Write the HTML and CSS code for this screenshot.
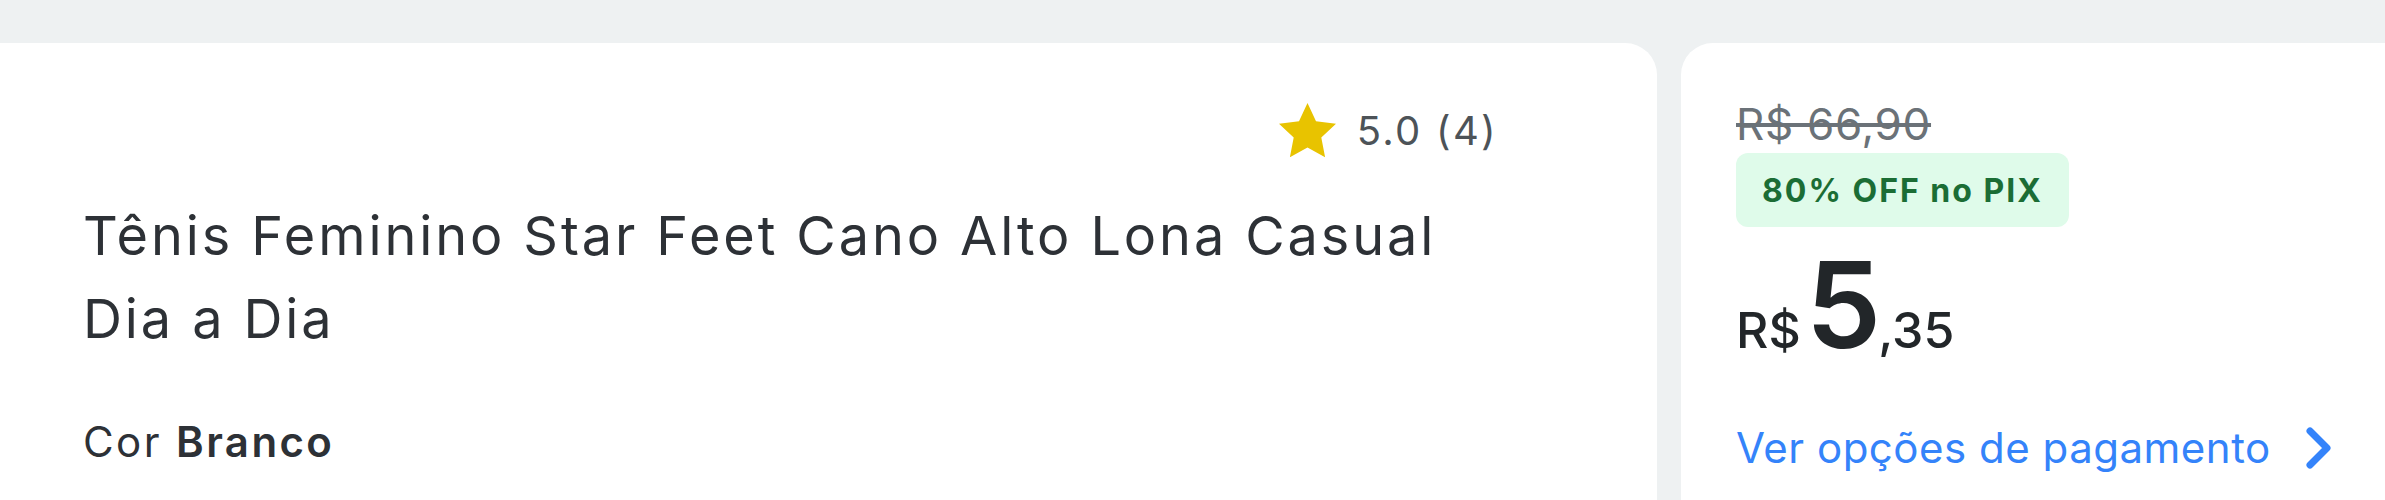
FILE: index.html
```html
<!DOCTYPE html>
<html lang="pt-BR">
<head>
    <meta charset="UTF-8">
    <title>Tênis Feminino Star Feet Cano Alto Lona Casual Dia a Dia</title>
    <link rel="stylesheet" href="styles.css">
</head>
<body>
    <div class="page">
        <div class="product">
            <div class="rating">
                <svg class="star" viewBox="0 0 57 55" width="57" height="55">
                    <path d="M28.5 0L37 18.3 57 20.7 42.3 34.5 46.1 54.3 28.5 44.5 10.9 54.3 14.7 34.5 0 20.7 20 18.3z" fill="#e8c300"/>
                </svg>
                <span class="rating-value">5.0 (4)</span>
            </div>
            <h1 class="title">Tênis Feminino Star Feet Cano Alto Lona Casual Dia a Dia</h1>
            <p class="variant">Cor <strong>Branco</strong></p>
        </div>

        <div class="buy">
            <s class="old-price">R$ 66,90</s>
            <div class="discount">80% OFF no PIX</div>
            <div class="price">
                <span class="currency">R$</span>
                <span class="fraction">5</span>
                <span class="cents">,35</span>
            </div>
            <a class="payment-link" href="#">
                Ver opções de pagamento
                <svg class="chevron" viewBox="0 0 26 42" width="26" height="42">
                    <path d="M4 4l17 17L4 38" fill="none" stroke="#3483fa" stroke-width="7" stroke-linecap="round" stroke-linejoin="round"/>
                </svg>
            </a>
        </div>
    </div>
</body>
</html>
```

FILE: styles.css
```css
body {
    margin: 0;
    background: #eef1f2;
    font-family: Inter, "Noto Sans", sans-serif;
    color: #2d3136;
    overflow: hidden;
}

.page {
    display: flex;
    gap: 24px;
    padding-top: 43px;
    height: 100vh;
    box-sizing: border-box;
}

/* left card: rating, title, colour */
.product {
    width: 1657px;
    flex-shrink: 0;
    box-sizing: border-box;
    background: #fff;
    border-top-right-radius: 32px;
    padding: 60px 159px 0 83px;
}

.rating {
    display: flex;
    align-items: center;
    justify-content: flex-end;
    gap: 21px;
    height: 55px;
}

.star {
    display: block;
}

.rating-value {
    font-size: 40px;
    letter-spacing: 2.3px;
    color: #4d5358;
}

.title {
    margin: 36px 0 0;
    font-size: 54px;
    font-weight: 400;
    letter-spacing: 2.9px;
    line-height: 83px;
}

.variant {
    margin: 57px 0 0;
    font-size: 42px;
    letter-spacing: 2.4px;
    line-height: 50px;
}

.variant strong {
    font-weight: 600;
}

/* right card: prices */
.buy {
    flex: 1;
    background: #fff;
    border-top-left-radius: 32px;
    padding: 53px 0 0 55px;
    display: flex;
    flex-direction: column;
    align-items: flex-start;
}

.old-price {
    font-size: 44px;
    letter-spacing: 0.7px;
    line-height: 56px;
    color: #6b7278;
}

.discount {
    margin-top: 1px;
    height: 74px;
    padding: 0 26px;
    display: flex;
    align-items: center;
    background: #dffbea;
    border-radius: 12px;
    color: #1b6d35;
    font-size: 32px;
    font-weight: 700;
    letter-spacing: 2px;
}

.price {
    display: flex;
    align-items: baseline;
    margin-top: 18px;
    color: #222629;
    line-height: 1;
}

.currency,
.cents {
    font-size: 50px;
    font-weight: 500;
}

.fraction {
    font-size: 120px;
    font-weight: 600;
    margin: 0 -3px 0 5px;
}

.payment-link {
    margin-top: 57px;
    display: flex;
    align-items: center;
    gap: 35px;
    font-size: 42px;
    letter-spacing: 0.5px;
    color: #3483fa;
    text-decoration: none;
}

.chevron {
    display: block;
}
```
